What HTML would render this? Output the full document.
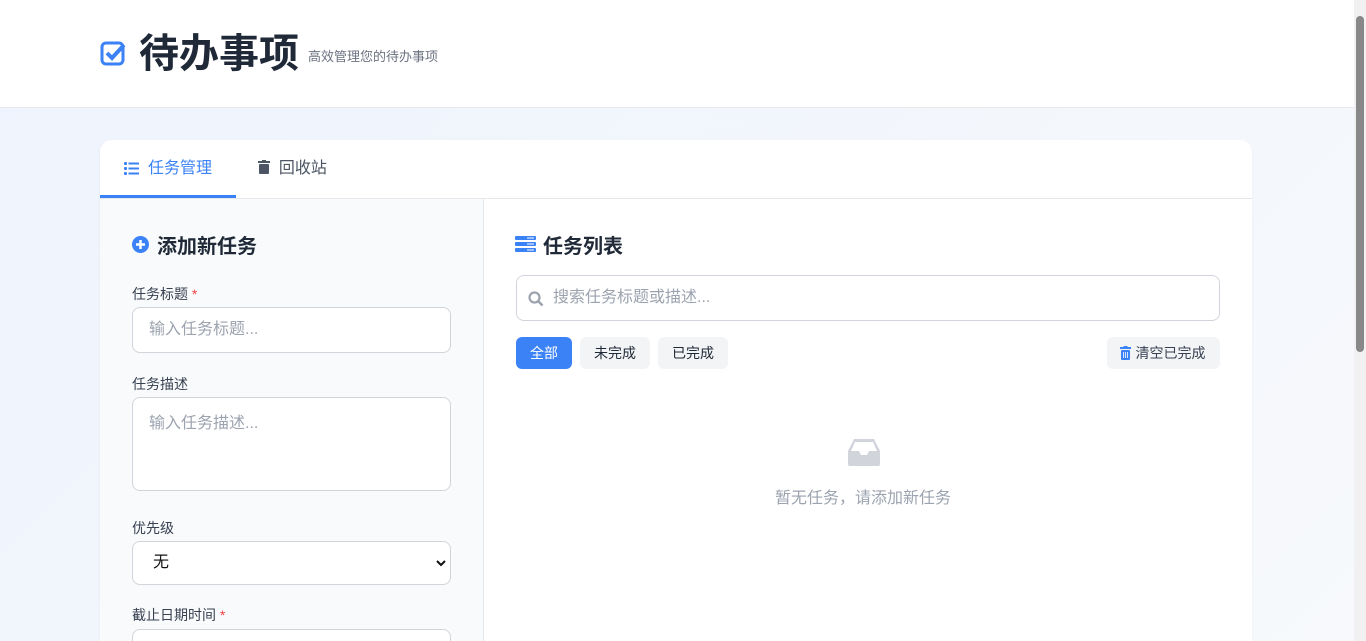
<!DOCTYPE html>
<html><head><meta charset="utf-8"><style>
*{box-sizing:border-box;margin:0;padding:0}
html{width:1366px;height:641px;overflow:hidden}
body{width:1366px;height:641px;overflow:hidden;font-family:"Liberation Sans","Noto Sans CJK SC",sans-serif;background:linear-gradient(135deg,#eef4fd,#f7f9fc);position:relative;color:#1f2937}
.hdr{position:absolute;left:0;top:0;width:1354px;height:108px;background:#fff;border-bottom:1px solid #e5e7eb}
.card{position:absolute;left:100px;top:140px;width:1152px;height:501px;background:#fff;border-radius:12px 12px 0 0;overflow:hidden;box-shadow:0 1px 3px rgba(0,0,0,.05)}
.tabs{height:59px;border-bottom:1px solid #e5e7eb;position:relative}
.tab{position:absolute;top:0;height:58px;line-height:58px;font-size:16px}
.left{position:absolute;left:0;top:59px;width:384px;height:442px;overflow:hidden;background:#f9fafb;border-right:1px solid #e5e7eb}
.lbl{position:absolute;left:32px;font-size:14px;color:#374151}
.inp{position:absolute;left:32px;width:319px;background:#fff;border:1px solid #d1d5db;border-radius:8px;font-size:16px;color:#9ca3af;padding-left:16px}
.btn{position:absolute;top:138px;height:32px;line-height:32px;border-radius:6px;font-size:14px;text-align:center;background:#f3f4f6;color:#1f2937}
h2{position:absolute;font-size:20px;font-weight:bold;color:#1f2937}
.sb{position:absolute;right:0;top:0;width:12px;height:641px;background:#f1f1f1}
.sb div{position:absolute;left:2px;top:16px;width:8px;height:336px;background:#888;border-radius:4px}
</style></head><body>
<div class="hdr">
<svg style="position:absolute;left:100px;top:40px" width="27" height="27" viewBox="0 0 27 27"><rect x="2" y="3" width="21" height="21" rx="4" fill="none" stroke="#3b82f6" stroke-width="3"/><path d="M7 13l5 5 12-13" fill="none" stroke="#3b82f6" stroke-width="4"/></svg>
<div style="position:absolute;left:139px;top:28px;font-size:40px;font-weight:bold;color:#1f2937;line-height:52px">待办事项</div>
<div style="position:absolute;left:308px;top:46px;font-size:13px;color:#6b7280">高效管理您的待办事项</div>
</div>
<div class="card">
<div class="tabs">
<div class="tab" style="left:0;width:136px;border-bottom:3px solid #3b82f6;color:#3b82f6;padding-left:48px"><svg style="position:absolute;left:24px;top:22px" width="15" height="13" viewBox="0 0 15 13"><rect x="0" y="0" width="3" height="3" rx="1" fill="#3b82f6"/><rect x="0" y="5" width="3" height="3" rx="1" fill="#3b82f6"/><rect x="0" y="10" width="3" height="3" rx="1" fill="#3b82f6"/><rect x="4.5" y="0.5" width="10.5" height="2" fill="#3b82f6"/><rect x="4.5" y="5.5" width="10.5" height="2" fill="#3b82f6"/><rect x="4.5" y="10.5" width="10.5" height="2" fill="#3b82f6"/></svg>任务管理</div>
<div class="tab" style="left:158px;color:#4b5563"><svg width="12" height="14" viewBox="0 0 12 14" style="vertical-align:-1px"><rect x="0" y="1" width="12" height="2" fill="#4b5563"/><rect x="4" y="0" width="4" height="2" fill="#4b5563"/><rect x="1" y="4" width="10" height="10" rx="1" fill="#4b5563"/></svg>&nbsp; 回收站</div>
</div>
<div class="left">
<svg style="position:absolute;left:32px;top:37px" width="17" height="17" viewBox="0 0 17 17"><circle cx="8.5" cy="8.5" r="8.5" fill="#3b82f6"/><path d="M8.5 4v9M4 8.5h9" stroke="#fff" stroke-width="2.5"/></svg>
<h2 style="left:57px;top:31px">添加新任务</h2>
<div class="lbl" style="top:85px">任务标题 <span style="color:#ef4444">*</span></div>
<div class="inp" style="top:108px;height:46px;line-height:44px">输入任务标题...</div>
<div class="lbl" style="top:175px">任务描述</div>
<div class="inp" style="top:198px;height:94px;padding-top:11px">输入任务描述...</div>
<div class="lbl" style="top:319px">优先级</div>
<div class="inp" style="top:342px;height:44px;line-height:42px;color:#111;padding-left:20px">无<svg style="position:absolute;right:4px;top:17px" width="10" height="8" viewBox="0 0 10 8"><path d="M1 2l4 4 4-4" fill="none" stroke="#111" stroke-width="2"/></svg></div>
<div class="lbl" style="top:406px">截止日期时间 <span style="color:#ef4444">*</span></div>
<div class="inp" style="top:430px;height:46px"></div>
</div>
<div style="position:absolute;left:384px;top:59px;width:768px;height:442px;overflow:hidden">
<svg style="position:absolute;left:31px;top:37px" width="21" height="16" viewBox="0 0 21 16"><rect width="21" height="4" rx="1" fill="#3b82f6"/><rect y="6" width="21" height="4" rx="1" fill="#3b82f6"/><rect y="12" width="21" height="4" rx="1" fill="#3b82f6"/><path d="M12 2h7M12 8h7M12 14h7" stroke="#fff" stroke-width="1"/></svg>
<h2 style="left:59px;top:31px">任务列表</h2>
<div class="inp" style="left:32px;top:76px;width:704px;height:46px;line-height:44px;padding-left:36px;font-size:16px"><svg style="position:absolute;left:11px;top:15px" width="16" height="16" viewBox="0 0 16 16"><circle cx="6.5" cy="6.5" r="5" fill="none" stroke="#9ca3af" stroke-width="2.2"/><path d="M10 10l4.5 4.5" stroke="#9ca3af" stroke-width="2.5"/></svg>搜索任务标题或描述...</div>
<div class="btn" style="left:32px;width:56px;background:#3b82f6;color:#fff">全部</div>
<div class="btn" style="left:96px;width:70px">未完成</div>
<div class="btn" style="left:174px;width:70px">已完成</div>
<div class="btn" style="left:623px;width:113px;color:#374151;padding-left:14px"><svg style="position:absolute;left:13px;top:9px" width="11" height="14" viewBox="0 0 11 14"><rect x="0" y="1" width="11" height="2" fill="#3b82f6"/><rect x="3.5" y="0" width="4" height="2" fill="#3b82f6"/><rect x="1" y="4" width="9" height="10" rx="1" fill="#3b82f6"/><path d="M3.5 6v6M5.5 6v6M7.5 6v6" stroke="#fff" stroke-width="0.8"/></svg>清空已完成</div>
<svg style="position:absolute;left:364px;top:240px" width="32" height="27" viewBox="0 0 32 27"><path d="M6 0h20l6 12v13a2 2 0 0 1-2 2H2a2 2 0 0 1-2-2V12z" fill="#d1d5db"/><path d="M7 3h18l4 9h-8l-2 4h-6l-2-4H3z" fill="#fff"/></svg>
<div style="position:absolute;left:0;width:758px;top:285px;text-align:center;font-size:16px;color:#9ca3af">暂无任务，请添加新任务</div>
</div>
</div>
<div class="sb"><div></div></div>
</body></html>
